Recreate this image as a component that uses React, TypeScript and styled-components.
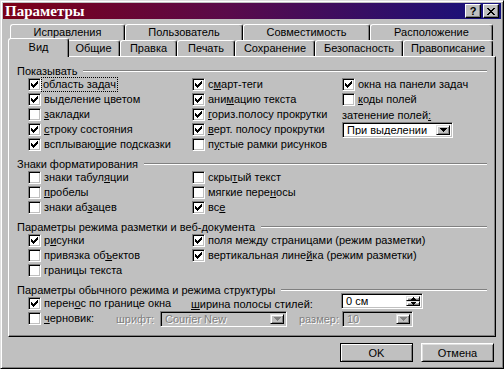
import styled, { createGlobalStyle } from 'styled-components';

const GlobalStyle = createGlobalStyle`
  html, body {
    margin: 0;
    padding: 0;
    background: #c0c0c0;
  }
  body {
    font-family: 'Liberation Sans', Arial, sans-serif;
    font-size: 11px;
    color: #000;
  }
`;

const TABS_BACK = [
  { title: 'Исправления', w: 115 },
  { title: 'Пользователь', w: 118 },
  { title: 'Совместимость', w: 127 },
  { title: 'Расположение', w: 123 },
];

const TABS_FRONT = [
  { title: 'Вид', w: 57, active: true },
  { title: 'Общие', w: 53 },
  { title: 'Правка', w: 57 },
  { title: 'Печать', w: 58 },
  { title: 'Сохранение', w: 80 },
  { title: 'Безопасность', w: 88 },
  { title: 'Правописание', w: 90 },
];

type Item = { label: string; checked?: boolean; focus?: boolean } | null;

const SHOW: Item[] = [
  { label: 'область задач', checked: true, focus: true },
  { label: 'с&март-теги', checked: true },
  { label: 'окна на панели задач', checked: true },
  { label: 'вы&деление цветом', checked: true },
  { label: 'ани&мацию текста', checked: true },
  { label: '&коды полей' },
  { label: '&закладки' },
  { label: '&гориз.полосу прокрутки', checked: true },
  null,
  { label: '&строку состояния', checked: true },
  { label: '&верт. полосу прокрутки', checked: true },
  null,
  { label: 'всплываю&щие подсказки', checked: true },
  { label: 'п&устые рамки рисунков' },
];

const MARKS: Item[] = [
  { label: 'знаки табул&яции' },
  { label: 'скры&тый текст' },
  { label: '&пробелы' },
  { label: 'мягкие пере&носы' },
  { label: 'знаки аб&зацев' },
  { label: 'вс&е', checked: true },
];

const LAYOUT: Item[] = [
  { label: 'р&исунки', checked: true },
  { label: 'поля между страницами (режим разметки)', checked: true },
  { label: 'привязка об&ъектов' },
  { label: 'вертикальная лине&йка (режим разметки)', checked: true },
  { label: 'границы текста' },
];

// "&" marks the access key, as in a Windows dialog resource
function Mnemonic({ text }: { text: string }) {
  const i = text.indexOf('&');
  if (i < 0) return <>{text}</>;
  return (
    <>
      {text.slice(0, i)}
      <u>{text.charAt(i + 1)}</u>
      {text.slice(i + 2)}
    </>
  );
}

const CheckMark = () => (
  <svg width='7' height='7' viewBox='0 0 7 7'>
    <path
      d='M0 2h1v3H0zM1 3h1v3H1zM2 4h1v3H2zM3 3h1v3H3zM4 2h1v3H4zM5 1h1v3H5zM6 0h1v3H6z'
      fill='#000'
    />
  </svg>
);

const ArrowDown = ({ color = '#000' }: { color?: string }) => (
  <svg width='7' height='4' viewBox='0 0 7 4'>
    <path d='M0 0h7v1H0zM1 1h5v1H1zM2 2h3v1H2zM3 3h1v1H3z' fill={color} />
  </svg>
);

const SpinArrow = ({ up }: { up?: boolean }) => (
  <svg width='5' height='3' viewBox='0 0 5 3'>
    <path
      d={up ? 'M2 0h1v1H2zM1 1h3v1H1zM0 2h5v1H0z' : 'M0 0h5v1H0zM1 1h3v1H1zM2 2h1v1H2z'}
      fill='#000'
    />
  </svg>
);

const CloseGlyph = () => (
  <svg width='8' height='7' viewBox='0 0 8 7'>
    <path
      d='M0 0h2v1H0zM6 0h2v1H6zM1 1h2v1H1zM5 1h2v1H5zM2 2h4v1H2zM3 3h2v1H3zM2 4h4v1H2zM1 5h2v1H1zM5 5h2v1H5zM0 6h2v1H0zM6 6h2v1H6z'
      fill='#000'
    />
  </svg>
);

function CheckItem({ item }: { item: Item }) {
  if (!item) return <span />;
  return (
    <CheckRow>
      <Box>{item.checked && <CheckMark />}</Box>
      <CheckLabel $focus={item.focus}>
        <Mnemonic text={item.label} />
      </CheckLabel>
    </CheckRow>
  );
}

export default function App() {
  return (
    <>
      <GlobalStyle />
      <Window>
        <TitleBar>
          <Title>Параметры</Title>
          <TitleButtons>
            <TitleButton>?</TitleButton>
            <TitleButton>
              <CloseGlyph />
            </TitleButton>
          </TitleButtons>
        </TitleBar>

        <Body>
          <TabRow>
            {TABS_BACK.map((t) => (
              <Tab key={t.title} $w={t.w}>
                {t.title}
              </Tab>
            ))}
          </TabRow>
          <TabRow>
            {TABS_FRONT.map((t) => (
              <Tab key={t.title} $w={t.w} $active={t.active}>
                {t.title}
              </Tab>
            ))}
          </TabRow>

          <Panel>
            <GroupTitle>Показывать</GroupTitle>
            <Grid $cols='164px 150px 1fr'>
              {SHOW.slice(0, 8).map((it, i) => (
                <CheckItem key={i} item={it} />
              ))}
              <PlainLabel>
                <Mnemonic text='затенение полей&:' />
              </PlainLabel>
              {SHOW.slice(9, 11).map((it, i) => (
                <CheckItem key={i} item={it} />
              ))}
              <Select $w={111}>
                <SelectText>При выделении</SelectText>
                <DropButton>
                  <ArrowDown />
                </DropButton>
              </Select>
              {SHOW.slice(12).map((it, i) => (
                <CheckItem key={i} item={it} />
              ))}
            </Grid>

            <Group>
              <GroupTitle>Знаки форматирования</GroupTitle>
              <Grid $cols='164px 150px'>
                {MARKS.map((it, i) => (
                  <CheckItem key={i} item={it} />
                ))}
              </Grid>
            </Group>

            <Group>
              <GroupTitle>Параметры режима разметки и веб-документа</GroupTitle>
              <Grid $cols='164px 1fr'>
                {LAYOUT.map((it, i) => (
                  <CheckItem key={i} item={it} />
                ))}
              </Grid>
            </Group>

            <Group>
              <GroupTitle>Параметры обычного режима и режима структуры</GroupTitle>
              <FlowRow>
                <Cell $w={163}>
                  <CheckItem item={{ label: 'перен&ос по границе окна', checked: true }} />
                </Cell>
                <PlainLabel $w={150}>
                  <Mnemonic text='&ширина полосы стилей:' />
                </PlainLabel>
                <Spin>
                  <SpinText>0 см</SpinText>
                  <SpinButtons>
                    <SpinButton>
                      <SpinArrow up />
                    </SpinButton>
                    <SpinButton>
                      <SpinArrow />
                    </SpinButton>
                  </SpinButtons>
                </Spin>
              </FlowRow>
              <FlowRow>
                <Cell $w={88}>
                  <CheckItem item={{ label: '&черновик:' }} />
                </Cell>
                <PlainLabel $w={44} $disabled>
                  шрифт:
                </PlainLabel>
                <Select $w={127} $disabled>
                  <SelectText $disabled>Courier New</SelectText>
                  <DropButton>
                    <ArrowDown color='#808080' />
                  </DropButton>
                </Select>
                <PlainLabel $w={43} $lead={12} $disabled>
                  размер:
                </PlainLabel>
                <Select $w={71} $disabled>
                  <SelectText $disabled>10</SelectText>
                  <DropButton>
                    <ArrowDown color='#808080' />
                  </DropButton>
                </Select>
              </FlowRow>
            </Group>
          </Panel>

          <Footer>
            <Button $default>OK</Button>
            <Button>Отмена</Button>
          </Footer>
        </Body>
      </Window>
    </>
  );
}

const Window = styled.div`
  box-sizing: border-box;
  width: 504px;
  height: 369px;
  background: #c0c0c0;
  border: 1px solid;
  border-color: #dfdfdf #000 #000 #dfdfdf;
  box-shadow: inset 1px 1px #fff, inset -1px -1px #808080;
  padding: 2px;
  display: flex;
  flex-direction: column;
`;

const TitleBar = styled.div`
  height: 16px;
  display: flex;
  align-items: center;
  justify-content: space-between;
  padding: 0 2px;
  background: linear-gradient(90deg, #7c0016 0%, #5a0a4a 45%, #14127e 100%);
`;

const Title = styled.span`
  font-family: 'Liberation Serif', 'Times New Roman', serif;
  font-weight: bold;
  font-size: 15px;
  line-height: 16px;
  color: #fff;
`;

const TitleButtons = styled.div`
  display: flex;
  gap: 2px;
`;

const TitleButton = styled.div`
  box-sizing: border-box;
  width: 16px;
  height: 14px;
  background: #c0c0c0;
  border: 1px solid;
  border-color: #fff #000 #000 #fff;
  box-shadow: inset -1px -1px #808080;
  display: flex;
  align-items: center;
  justify-content: center;
  font-weight: bold;
  font-size: 11px;
  line-height: 1;
`;

const Body = styled.div`
  flex: 1;
  padding: 5px 5px 0 5px;
  display: flex;
  flex-direction: column;
`;

const TabRow = styled.div`
  display: flex;
  height: 16px;
  padding-left: 2px;
`;

const Tab = styled.div<{ $w: number; $active?: boolean }>`
  box-sizing: border-box;
  flex: none;
  width: ${(p) => p.$w + (p.$active ? 4 : 0)}px;
  height: ${(p) => (p.$active ? 19 : 16)}px;
  margin: ${(p) => (p.$active ? '-2px -2px 0 -2px' : '0')};
  background: #c0c0c0;
  border: 1px solid;
  border-color: #fff #000 transparent #fff;
  border-bottom: none;
  border-radius: 3px 3px 0 0;
  box-shadow: inset -1px 0 #808080;
  display: flex;
  align-items: center;
  justify-content: center;
  padding-bottom: ${(p) => (p.$active ? 2 : 1)}px;
  white-space: nowrap;
  position: relative;
  z-index: ${(p) => (p.$active ? 2 : 'auto')};
`;

const Panel = styled.div`
  box-sizing: border-box;
  height: 281px;
  border: 1px solid;
  border-color: #fff #000 #000 #fff;
  box-shadow: inset -1px -1px #808080;
  padding: 7px 8px 0 8px;
`;

const Group = styled.div`
  margin-top: 5px;
`;

const GroupTitle = styled.div`
  display: flex;
  align-items: center;
  height: 13px;
  white-space: nowrap;

  &::after {
    content: '';
    flex: 1;
    margin-left: 6px;
    height: 0;
    border-top: 1px solid #808080;
    border-bottom: 1px solid #fff;
  }
`;

const Grid = styled.div<{ $cols: string }>`
  display: grid;
  grid-template-columns: ${(p) => p.$cols};
  grid-auto-rows: 15px;
  align-items: center;
  padding-left: 11px;
`;

const FlowRow = styled.div`
  display: flex;
  align-items: center;
  height: 15px;
  padding-left: 11px;
`;

const Cell = styled.div<{ $w: number }>`
  width: ${(p) => p.$w}px;
  flex: none;
`;

const CheckRow = styled.div`
  display: flex;
  align-items: center;
  white-space: nowrap;
`;

const Box = styled.span`
  box-sizing: border-box;
  flex: none;
  width: 13px;
  height: 13px;
  background: #fff;
  border: 1px solid;
  border-color: #808080 #fff #fff #808080;
  box-shadow: inset 1px 1px #000, inset -1px -1px #c0c0c0;
  display: flex;
  align-items: center;
  justify-content: center;
`;

const CheckLabel = styled.span<{ $focus?: boolean }>`
  margin-left: ${(p) => (p.$focus ? 1 : 2)}px;
  padding: 0 1px;
  line-height: 13px;
  outline: ${(p) => (p.$focus ? '1px dotted #000' : 'none')};
`;

const PlainLabel = styled.span<{ $w?: number; $lead?: number; $disabled?: boolean }>`
  flex: none;
  width: ${(p) => (p.$w ? `${p.$w}px` : 'auto')};
  margin-left: ${(p) => p.$lead ?? 0}px;
  white-space: nowrap;
  color: ${(p) => (p.$disabled ? '#808080' : '#000')};
  text-shadow: ${(p) => (p.$disabled ? '1px 1px 0 #fff' : 'none')};
`;

const Select = styled.div<{ $w: number; $disabled?: boolean }>`
  box-sizing: border-box;
  flex: none;
  width: ${(p) => p.$w}px;
  height: 16px;
  background: ${(p) => (p.$disabled ? '#c0c0c0' : '#fff')};
  border: 1px solid;
  border-color: #808080 #fff #fff #808080;
  box-shadow: inset 1px 1px #000, inset -1px -1px #c0c0c0;
  padding: 2px;
  display: flex;
  align-items: stretch;
`;

const SelectText = styled.span<{ $disabled?: boolean }>`
  flex: 1;
  padding-left: 2px;
  line-height: 10px;
  white-space: nowrap;
  overflow: hidden;
  color: ${(p) => (p.$disabled ? '#808080' : '#000')};
  text-shadow: ${(p) => (p.$disabled ? '1px 1px 0 #fff' : 'none')};
`;

const DropButton = styled.span`
  box-sizing: border-box;
  flex: none;
  width: 14px;
  background: #c0c0c0;
  border: 1px solid;
  border-color: #dfdfdf #000 #000 #dfdfdf;
  box-shadow: inset 1px 1px #fff, inset -1px -1px #808080;
  display: flex;
  align-items: center;
  justify-content: center;
`;

const Spin = styled(Select).attrs({ $w: 82 })`
  margin-bottom: 5px;
`;

const SpinText = styled(SelectText)``;

const SpinButtons = styled.span`
  flex: none;
  width: 14px;
  display: flex;
  flex-direction: column;
`;

const SpinButton = styled(DropButton)`
  width: 14px;
  flex: 1;
`;

const Footer = styled.div`
  display: flex;
  justify-content: flex-end;
  gap: 8px;
  padding: 6px 2px 0 0;
`;

const Button = styled.div<{ $default?: boolean }>`
  box-sizing: border-box;
  width: 73px;
  height: 19px;
  background: #c0c0c0;
  border: 1px solid;
  border-color: ${(p) => (p.$default ? '#000' : '#fff #000 #000 #fff')};
  box-shadow: ${(p) =>
    p.$default
      ? 'inset 1px 1px #fff, inset -1px -1px #808080'
      : 'inset 1px 1px #dfdfdf, inset -1px -1px #808080'};
  display: flex;
  align-items: center;
  justify-content: center;
`;
